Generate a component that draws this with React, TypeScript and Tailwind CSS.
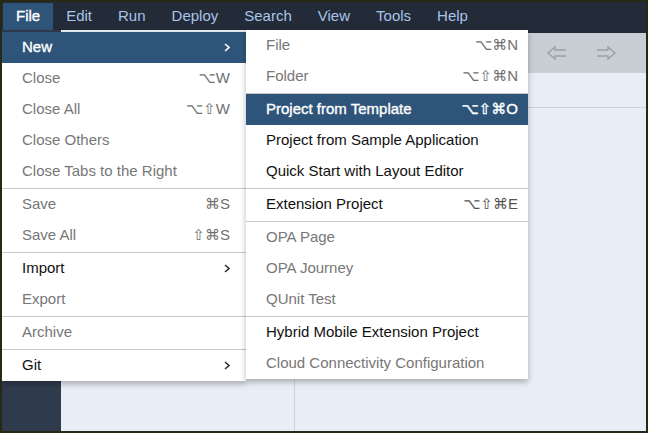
import React from 'react'

const FONT = { fontFamily: '"Liberation Sans", Arial, "DejaVu Sans", sans-serif' }

type Item =
  | { sep: true }
  | { label: string; key?: string; on?: boolean; sub?: boolean; active?: boolean }

const FILE_MENU: Item[] = [
  { label: 'New', sub: true, on: true, active: true },
  { label: 'Close', key: '⌥W' },
  { label: 'Close All', key: '⌥⇧W' },
  { label: 'Close Others' },
  { label: 'Close Tabs to the Right' },
  { sep: true },
  { label: 'Save', key: '⌘S' },
  { label: 'Save All', key: '⇧⌘S' },
  { sep: true },
  { label: 'Import', sub: true, on: true },
  { label: 'Export' },
  { sep: true },
  { label: 'Archive' },
  { sep: true },
  { label: 'Git', sub: true, on: true },
]

const NEW_MENU: Item[] = [
  { label: 'File', key: '⌥⌘N' },
  { label: 'Folder', key: '⌥⇧⌘N' },
  { sep: true },
  { label: 'Project from Template', key: '⌥⇧⌘O', on: true, active: true },
  { label: 'Project from Sample Application', on: true },
  { label: 'Quick Start with Layout Editor', on: true },
  { sep: true },
  { label: 'Extension Project', key: '⌥⇧⌘E', on: true },
  { sep: true },
  { label: 'OPA Page' },
  { label: 'OPA Journey' },
  { label: 'QUnit Test' },
  { sep: true },
  { label: 'Hybrid Mobile Extension Project', on: true },
  { label: 'Cloud Connectivity Configuration' },
]

const TOP = ['File', 'Edit', 'Run', 'Deploy', 'Search', 'View', 'Tools', 'Help']

function Chevron({ white }: { white?: boolean }) {
  return (
    <svg width="6" height="9" viewBox="0 0 6 9" className={white ? 'text-white' : 'text-[#333]'}>
      <path d="M1 1 L5 4.5 L1 8" fill="none" stroke="currentColor" strokeWidth="1.6" />
    </svg>
  )
}

function Menu({ items, padRight }: { items: Item[]; padRight: string }) {
  return (
    <div className="bg-white shadow-[0_3px_6px_rgba(0,0,0,0.28)]">
      {items.map((it, i) =>
        'sep' in it ? (
          <div key={i} className="mt-px border-t border-[#c8c8c8]" />
        ) : (
          <div
            key={i}
            className={`flex h-[31px] items-center justify-between pl-5 ${padRight} text-[15px] ${
              it.active
                ? 'bg-[#2e5579] text-white [-webkit-text-stroke:0.35px_white]'
                : it.on
                  ? 'text-[#111]'
                  : 'text-[#777]'
            }`}
          >
            <span>{it.label}</span>
            {it.key && (
              <span className={it.active ? 'text-white' : it.on ? 'text-[#555]' : 'text-[#6f6f6f]'}>
                {it.key}
              </span>
            )}
            {it.sub && <Chevron white={it.active} />}
          </div>
        ),
      )}
    </div>
  )
}

function Arrow({ flip }: { flip?: boolean }) {
  return (
    <svg width="22" height="16" viewBox="0 0 22 16">
      <path
        d={
          flip
            ? 'M2 5 L13 5 L13 2 L20 8 L13 14 L13 11 L2 11'
            : 'M20 5 L9 5 L9 2 L2 8 L9 14 L9 11 L20 11'
        }
        fill="none"
        stroke="#9aa0a8"
        strokeWidth="1.4"
        strokeLinejoin="miter"
      />
    </svg>
  )
}

export default function App() {
  return (
    <div
      className="relative flex h-[433px] w-[648px] flex-col overflow-hidden border-2 border-[#262913] bg-[#e9edf5]"
      style={FONT}
    >
      {/* menubar */}
      <div className="flex h-[28px] shrink-0 items-end bg-[#232b38] pl-px">
        {TOP.map((t) => (
          <div
            key={t}
            className={`flex h-[27px] items-center px-[13px] text-[15px] ${
              t === 'File'
                ? 'bg-[#2e5579] text-white [-webkit-text-stroke:0.35px_white]'
                : 'text-[#a9c4e8]'
            }`}
          >
            {t}
          </div>
        ))}
      </div>

      {/* workspace */}
      <div className="flex flex-1">
        <div className="w-[59px] bg-[#2f3b4d]" />
        <div className="w-[234px] border-r border-[#cdd2d9] bg-[#e9edf5]" />
        <div className="flex flex-1 flex-col border-t-[3px] border-[#232b38]">
          <div className="flex h-[40px] items-center justify-end gap-[27px] bg-[#c9ced5] pr-[29px]">
            <Arrow />
            <Arrow flip />
          </div>
          <div className="h-[35px] border-b border-[#cfd3d9]" />
        </div>
      </div>

      {/* File menu */}
      <div className="absolute left-0 top-[29px] w-[244px] pt-px">
        <Menu items={FILE_MENU} padRight="pr-[16px]" />
      </div>

      {/* New submenu */}
      <div className="absolute left-[244px] top-[28px] w-[282px]">
        <Menu items={NEW_MENU} padRight="pr-[10px]" />
      </div>
    </div>
  )
}
